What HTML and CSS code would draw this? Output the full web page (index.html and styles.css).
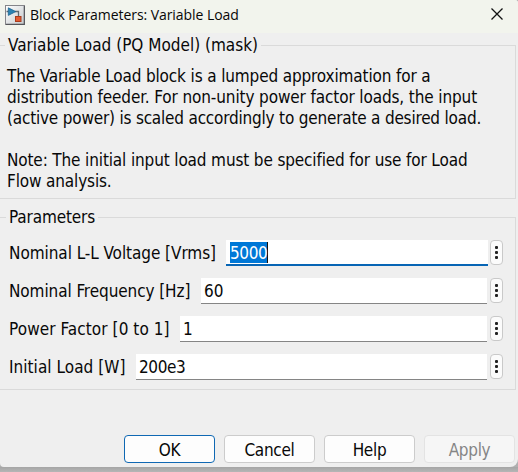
FILE: index.html
```
<!DOCTYPE html>
<html lang="en">
<head>
<meta charset="utf-8">
<title>Block Parameters: Variable Load</title>
<link rel="stylesheet" href="styles.css">
</head>
<body>
<main class="dialog">
  <header class="titlebar">
    <svg class="app-icon" width="20" height="20" viewBox="0 0 20 20">
      <defs><linearGradient id="tile" x2="1" y2="1"><stop stop-color="#fff"/><stop offset="1" stop-color="#c5c9cc"/></linearGradient></defs>
      <rect x=".5" y=".5" width="19" height="19" fill="url(#tile)" stroke="#85858a"/>
      <path d="M1 19.300h18.300V1" fill="none" stroke="#55565a" stroke-width="1.200"/>
      <path d="M1.500 6.500h2M10 6.500h3.500v5" fill="none" stroke="#5f6970" stroke-width="1.300"/>
      <path d="M3.300 2.800 10.800 6.600l-7.500 3.800z" fill="#2b83b3" stroke="#1d648f" stroke-width=".8"/>
      <rect x="10.500" y="11.500" width="5.500" height="5" fill="#e25b31" stroke="#a83c1d"/>
    </svg>
    <h1 class="title">Block Parameters: Variable Load</h1>
    <svg class="close" width="12" height="12" viewBox="0 0 12 12"><path d="M.5.5l11 11M11.500.5l-11 11" stroke="#111" stroke-width="1.300" fill="none"/></svg>
  </header>
  <section class="group description">
    <h2 class="legend">Variable Load (PQ Model) (mask)</h2>
    <p class="text"><span class="t1">The Variable Load block is a lumped approximation for a</span><br><span class="t2">distribution feeder. For non-unity power factor loads, the input</span><br><span class="t3">(active power) is scaled accordingly to generate a desired load.</span><br><br><span class="t1">Note: The initial input load must be specified for use for Load</span><br><span class="t1">Flow analysis.</span></p>
  </section>
  <section class="group params">
    <h2 class="legend t1">Parameters</h2>
    <div class="row voltage"><span class="label">Nominal L-L Voltage [Vrms]</span><div class="field focused"><span class="selected">5000</span></div><button class="more"><i></i><i></i><i></i></button></div>
    <div class="row frequency"><span class="label">Nominal Frequency [Hz]</span><div class="field">60</div><button class="more"><i></i><i></i><i></i></button></div>
    <div class="row factor"><span class="label">Power Factor [0 to 1]</span><div class="field">1</div><button class="more"><i></i><i></i><i></i></button></div>
    <div class="row load"><span class="label">Initial Load [W]</span><div class="field">200e3</div><button class="more"><i></i><i></i><i></i></button></div>
  </section>
  <footer class="actions">
    <button class="btn primary">OK</button>
    <button class="btn">Cancel</button>
    <button class="btn">Help</button>
    <button class="btn disabled">Apply</button>
  </footer>
</main>
</body>
</html>
```
FILE: styles.css
```
* { box-sizing: border-box; }
body {
  margin: 0;
  height: 472px;
  overflow: hidden;
  background: linear-gradient(#a5a5a5, #b6b6b6) 0 467px / 100% 5px no-repeat #b0b0b0;
  color: #080808;
  font: 17px/21px "DejaVu Sans Condensed", "DejaVu Sans", sans-serif;
}
h1, h2, p { margin: 0; font-weight: normal; }
button { font: inherit; color: inherit; padding: 0; }
.dialog {
  height: 467px;
  display: flex;
  flex-direction: column;
  background: #efefef;
  border-radius: 0 3px 8px 4px;
  overflow: hidden;
}
.titlebar {
  height: 33px;
  flex: none;
  display: flex;
  align-items: center;
  padding: 0 15px 4px 5px;
  background: #f2f4ed;
}
.title {
  flex: 1;
  margin-left: 5px;
  font: 14px/20px "Open Sans", sans-serif;
  letter-spacing: -0.06px;
}
.close { margin-top: -1px; }
.group {
  flex: none;
  margin-right: 2px;
  border: 1px solid #dadada;
  border-left: 0;
}
.legend {
  width: max-content;
  margin-top: -11px;
  font-size: 17px;
  line-height: 21px;
  background: #efefef;
}
.description { height: 154px; margin-top: 12px; }
.description .legend { margin-left: 5px; padding: 0 3px; }
.text { margin: 10px 0 0 7px; white-space: nowrap; }
.t1 { letter-spacing: -0.14px; }
.t2 { letter-spacing: -0.12px; }
.t3 { letter-spacing: -0.2px; }
.params { height: 173px; margin-top: 18px; padding-right: 12px; }
.params .legend { margin-left: 6px; padding: 0 3px; }
.row { display: flex; height: 26px; margin-bottom: 12px; }
.params .legend + .row { margin-top: 12px; }
.label { padding-left: 9px; line-height: 26px; white-space: nowrap; }
.voltage .label { width: 226px; letter-spacing: -0.06px; }
.frequency .label { width: 201px; letter-spacing: -0.09px; }
.factor .label { width: 180px; letter-spacing: 0.08px; }
.load .label { width: 136px; letter-spacing: 0.04px; }
.field {
  flex: 1;
  height: 26px;
  padding: 2px 0 0 3px;
  margin-right: 3px;
  background: #fff;
  border: 0 solid #858585;
  border-bottom-width: 1px;
  line-height: 22px;
}
.load .field { letter-spacing: -0.4px; }
.focused { margin-right: 2px; padding-left: 4px; border-bottom: 2px solid #0765b5; }
.selected {
  display: block;
  width: 38px;
  height: 21px;
  line-height: 22px;
  letter-spacing: -0.4px;
  color: #fff;
  background: #0078d7;
  border-right: 1px solid #111;
}
.more {
  width: 13px;
  height: 25px;
  display: flex;
  flex-direction: column;
  align-items: center;
  justify-content: center;
  gap: 2px;
  background: #fbfbfb;
  border: 1px solid #c9c9c9;
  border-radius: 4px;
}
.more i { width: 3px; height: 3px; border-radius: 1px; background: #222; }
.actions { display: flex; justify-content: flex-end; gap: 9px; margin: 45px 3px 0 0; }
.btn {
  width: 91px;
  height: 28px;
  padding-top: 2px;
  background: #fdfdfd;
  border: 1px solid #ccc;
  border-radius: 4px;
  letter-spacing: -0.3px;
}
.primary { border-color: #0f68b3; }
.disabled { color: #858585; background: #f6f6f6; border-color: #e3e3e3; }
```
